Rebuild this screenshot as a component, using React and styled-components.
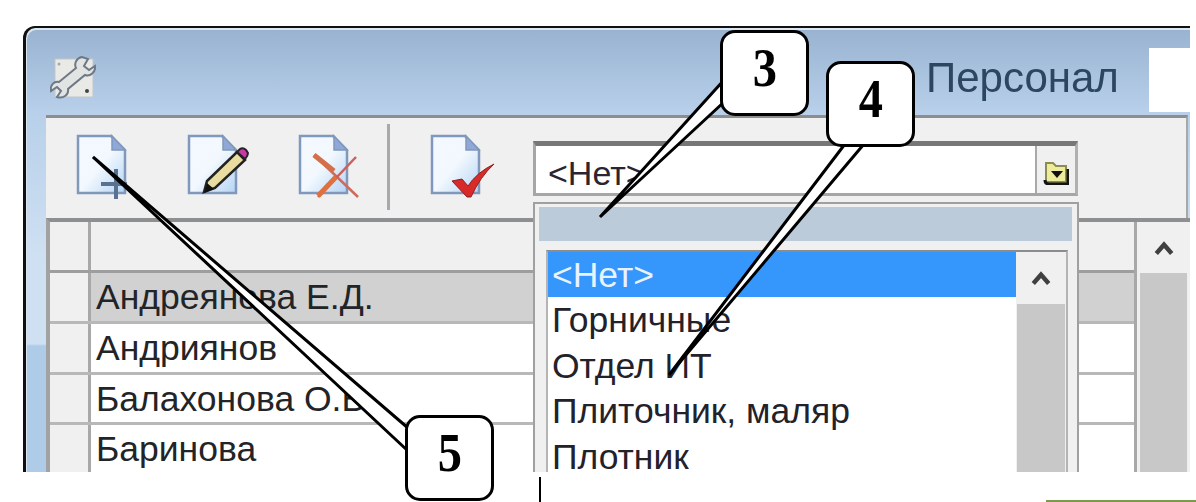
import React from "react";
import styled, { createGlobalStyle } from "styled-components";

const GlobalStyle = createGlobalStyle`
  html, body {
    margin: 0;
    padding: 0;
    background: #ffffff;
    overflow: hidden;
  }
`;

const Page = styled.div`
  position: relative;
  width: 1196px;
  height: 502px;
  padding: 26px 0 0 23px;
  box-sizing: border-box;
  display: flex;
  flex-direction: column;
  overflow: hidden;
  font-family: "Liberation Sans", Arial, sans-serif;
`;

const AppWindow = styled.div`
  position: relative;
  width: 1167px;
  height: 446px;
  flex: none;
  box-sizing: border-box;
  border-top: 2px solid #111111;
  border-left: 3px solid #111111;
  border-top-left-radius: 12px;
  box-shadow: inset 1px 2px 0 #dbe6f0;
  background: linear-gradient(
    180deg,
    #98b2d0 0,
    #b8d0ea 85px,
    #cfe0f2 230px,
    #cfe0f2 316px,
    #aecbe8 318px,
    #aecbe8 100%
  );
  overflow: hidden;
  display: flex;
  flex-direction: column;
  filter: blur(0.6px);
`;

const TitleBar = styled.header`
  height: 87px;
  flex: none;
  display: flex;
  align-items: center;
  padding-left: 24px;
`;

const AppIcon = styled.svg`
  width: 46px;
  height: 46px;
  flex: none;
  margin-top: 12px;
`;

const Title = styled.h1`
  margin: 13px 0 0 830px;
  flex: none;
  font-size: 42px;
  font-weight: 400;
  color: #2c4560;
  white-space: nowrap;
`;

const ActiveTab = styled.div`
  align-self: flex-end;
  width: 43px;
  height: 64px;
  margin: 0 0 3px 30px;
  flex: none;
  background: #ffffff;
`;

const Panel = styled.section`
  margin-left: 20px;
  flex: 1;
  min-height: 0;
  display: flex;
  flex-direction: column;
`;

const Toolbar = styled.div`
  position: relative;
  height: 103px;
  flex: none;
  margin-right: 2px;
  display: flex;
  align-items: center;
  padding: 3px 0 0 30px;
  box-sizing: border-box;
  background: #f0f0f0;
  border-top: 3px solid #8b8d8f;
  border-right: 2px solid #a8a8a8;
`;

const ToolButton = styled.button`
  width: 54px;
  height: 62px;
  padding: 0;
  margin: 0 ${(p) => p.$gap}px 11px 0;
  border: none;
  background: none;
  flex: none;
`;

const ToolIcon = styled.svg`
  width: 54px;
  height: 62px;
  display: block;
  overflow: visible;
`;

const ToolSeparator = styled.div`
  width: 3px;
  height: 86px;
  background: #a8a9aa;
  margin: 0 40px 5px 0;
  flex: none;
`;

const Combo = styled.div`
  width: 545px;
  height: 55px;
  margin: 0 0 3px 49px;
  box-sizing: border-box;
  flex: none;
  display: flex;
  background: #ffffff;
  border: 3px solid #a6a6a6;
  border-top: 5px solid #777777;
  border-right-color: #b0b0b0;
`;

const ComboValue = styled.div`
  flex: 1;
  padding-left: 12px;
  font-size: 34px;
  line-height: 54px;
  color: #2a2530;
`;

const ComboButton = styled.div`
  width: 38px;
  flex: none;
  display: flex;
  align-items: center;
  justify-content: center;
  background: #f0f0f0;
  border-left: 2px solid #a9a9a9;
`;

const FolderIcon = styled.svg`
  width: 26px;
  height: 26px;
  margin-top: 6px;
`;

const Grid = styled.div`
  flex: 1;
  min-height: 0;
  display: flex;
  border-top: 4px solid #8d8f90;
  border-left: 4px solid #a2a2a2;
  overflow: hidden;
`;

const GridBody = styled.div`
  flex: 1;
  min-width: 0;
  display: flex;
  flex-direction: column;
  border-right: 3px solid #a8a8a8;
`;

const GridRow = styled.div`
  display: flex;
  flex: none;
  height: ${(p) => p.$height}px;
  box-sizing: border-box;
  border-bottom: 3px solid ${(p) => (p.$header ? "#9d9e9f" : "#b8b8b8")};
  background: ${(p) => (p.$header ? "#f0f0f0" : p.$selected ? "#d1d1d1" : "#ffffff")};
`;

const RowHead = styled.div`
  width: 38px;
  flex: none;
  background: #f0f0f0;
  border-right: 3px solid #a8a8a8;
`;

const RowName = styled.div`
  flex: 1;
  padding-left: 5px;
  font-size: 35.5px;
  line-height: 48px;
  color: #222428;
  white-space: nowrap;
`;

const ScrollBar = styled.div`
  width: ${(p) => p.$width}px;
  flex: none;
  display: flex;
  flex-direction: column;
  align-items: stretch;
  background: #f0f0f0;
`;

const ScrollUp = styled.div`
  height: ${(p) => p.$height}px;
  flex: none;
  display: flex;
  align-items: center;
  justify-content: center;
`;

const Chevron = styled.svg`
  width: 22px;
  height: 16px;
`;

const ScrollTrack = styled.div`
  flex: 1;
  margin: 0 ${(p) => p.$inset}px;
  background: #c8c8c8;
`;

const Dropdown = styled.div`
  position: absolute;
  left: 507px;
  top: 174px;
  width: 546px;
  height: 272px;
  box-sizing: border-box;
  padding: 3px 5px 0 4px;
  background: #f0f0f0;
  border: 2px solid #a0a0a0;
  border-bottom: none;
  display: flex;
  flex-direction: column;
`;

const DropdownHeader = styled.div`
  height: 34px;
  flex: none;
  background: #bccbd9;
`;

const ListBox = styled.div`
  flex: 1;
  min-height: 0;
  margin: 9px 4px 0 7px;
  display: flex;
  background: #ffffff;
  border: 2px solid #b4b4b4;
  border-top-color: #8c8c8c;
  border-bottom: none;
`;

const ListItems = styled.ul`
  flex: 1;
  min-width: 0;
  margin: 0;
  padding: 0;
  list-style: none;
`;

const ListItem = styled.li`
  height: 45.4px;
  box-sizing: border-box;
  padding-left: 4px;
  font-size: 35.5px;
  line-height: 46px;
  color: ${(p) => (p.$active ? "#e8f3ff" : "#23222a")};
  background: ${(p) => (p.$active ? "#3596fc" : "transparent")};
  white-space: nowrap;
`;

const CalloutLines = styled.svg`
  position: absolute;
  left: 0;
  top: 0;
  width: 1196px;
  height: 502px;
  pointer-events: none;
`;

const Callout = styled.div`
  position: absolute;
  left: ${(p) => p.$x}px;
  top: ${(p) => p.$y}px;
  width: 89px;
  height: 86px;
  box-sizing: border-box;
  border: 3px solid #000000;
  border-radius: 15px;
  background: #ffffff;
  display: flex;
  align-items: center;
  justify-content: center;
  padding-bottom: 11px;
  font-family: "Liberation Serif", "Times New Roman", serif;
  font-size: 55px;
  font-weight: 700;
  color: #000000;
`;

const Digit = styled.span`
  display: inline-block;
  transform: scaleX(0.88);
`;

const Footer = styled.footer`
  flex: 1;
  display: flex;
  position: relative;
`;

const FooterTick = styled.div`
  width: 2px;
  height: 25px;
  margin: 5px 0 0 516px;
  background: #000000;
  flex: none;
`;

const FooterRule = styled.div`
  align-self: flex-end;
  width: 150px;
  height: 2px;
  margin-left: 505px;
  background: #7b9a4e;
  flex: none;
`;

const DocSheet = ({ id }) => (
  <>
    <defs>
      <linearGradient id={id} x1="0" y1="0" x2="1" y2="1">
        <stop offset="0" stopColor="#f4f9ff" />
        <stop offset="0.5" stopColor="#f2f8fe" />
        <stop offset="1" stopColor="#b4d4f5" />
      </linearGradient>
    </defs>
    <path d="M2 3 H35 L49 17 V60 H2 Z" fill={`url(#${id})`} stroke="#8098bb" strokeWidth="2.5" />
    <path d="M36 3 V17 H49 Z" fill="#8fa8d8" stroke="#8098bb" strokeWidth="1.5" />
  </>
);

const AddIcon = () => (
  <ToolIcon viewBox="0 0 54 62">
    <DocSheet id="docAdd" />
    <path d="M25 51 H51 M40 36 V66" stroke="#5a7292" strokeWidth="4" fill="none" />
  </ToolIcon>
);

const EditIcon = () => (
  <ToolIcon viewBox="0 0 54 62">
    <DocSheet id="docEdit" />
    <path d="M17 59 L20 48 L50 19 L58 27 L28 55 Z" fill="#e9dca0" stroke="#222222" strokeWidth="2.5" />
    <path d="M17 60 L20 50 L27 56 Z" fill="#111111" />
    <path d="M50 19 L53 16 Q56 14 59 17 L61 20 Q61 23 58 26 Z" fill="#c93aa6" stroke="#222222" strokeWidth="2" />
  </ToolIcon>
);

const DeleteIcon = () => (
  <ToolIcon viewBox="0 0 54 62">
    <DocSheet id="docDel" />
    <path d="M16 22 L60 64" stroke="#cf6b5c" strokeWidth="2.5" fill="none" />
    <path d="M16 22 L36 38" stroke="#d56f4a" strokeWidth="5" fill="none" />
    <path d="M20 64 L58 24" stroke="#c9605a" strokeWidth="2.5" fill="none" />
    <path d="M20 63 L38 44" stroke="#e0703f" strokeWidth="5" fill="none" />
  </ToolIcon>
);

const CheckIcon = () => (
  <ToolIcon viewBox="0 0 54 62">
    <DocSheet id="docChk" />
    <path d="M22 48 L32 46 L38 53 Q46 40 64 31 Q50 44 41 64 L37 64 Z" fill="#d92a2a" stroke="#8e1f1f" strokeWidth="1" />
  </ToolIcon>
);

const UpChevron = () => (
  <Chevron viewBox="0 0 20 14">
    <path d="M3 12 L10 4 L17 12" fill="none" stroke="#404040" strokeWidth="4" />
  </Chevron>
);

const App = () => {
  return (
    <Page>
      <GlobalStyle />
      <AppWindow>
        <TitleBar>
          <AppIcon viewBox="0 0 46 46">
            <rect x="5" y="4" width="38" height="38" fill="#e9e9e6" stroke="#c3c5c8" />
            <circle cx="9" cy="9" r="1.5" fill="#a8a8a8" />
            <circle cx="37" cy="36" r="2" fill="#444444" />
            <path
              d="M32 2 C26 3 24 9 26 13 L9 27 C4 26 0 30 1 36 L7 32 L11 36 L7 42 C13 44 19 40 18 34 L35 20 C40 22 46 17 45 11 L39 15 L34 11 L38 4 Z"
              fill="#e2e3e3"
              stroke="#6d7986"
              strokeWidth="2"
            />
          </AppIcon>
          <Title>Персонал</Title>
          <ActiveTab />
        </TitleBar>
        <Panel>
          <Toolbar>
            <ToolButton $gap={57}>
              <AddIcon />
            </ToolButton>
            <ToolButton $gap={57}>
              <EditIcon />
            </ToolButton>
            <ToolButton $gap={35}>
              <DeleteIcon />
            </ToolButton>
            <ToolSeparator />
            <ToolButton $gap={0}>
              <CheckIcon />
            </ToolButton>
            <Combo>
              <ComboValue>&lt;Нет&gt;</ComboValue>
              <ComboButton>
                <FolderIcon viewBox="0 0 26 26">
                  <path d="M3 23 V4 H10 L13 7 H23 V23 Z" fill="#ecec9a" stroke="#8c8c52" strokeWidth="2" />
                  <path d="M2 21 Q2 25 6 25 H25 V10" fill="none" stroke="#141414" strokeWidth="3" />
                  <path d="M8 12 H20 L14 19 Z" fill="#111111" />
                </FolderIcon>
              </ComboButton>
            </Combo>
          </Toolbar>
          <Grid>
            <GridBody>
              <GridRow $header $height={51}>
                <RowHead />
              </GridRow>
              <GridRow $selected $height={51}>
                <RowHead />
                <RowName>Андреянова Е.Д.</RowName>
              </GridRow>
              <GridRow $height={51}>
                <RowHead />
                <RowName>Андриянов</RowName>
              </GridRow>
              <GridRow $height={50}>
                <RowHead />
                <RowName>Балахонова О.В.</RowName>
              </GridRow>
              <GridRow $height={51}>
                <RowHead />
                <RowName>Баринова</RowName>
              </GridRow>
            </GridBody>
            <ScrollBar $width={53}>
              <ScrollUp $height={51}>
                <UpChevron />
              </ScrollUp>
              <ScrollTrack $inset={3} />
            </ScrollBar>
          </Grid>
        </Panel>
        <Dropdown>
          <DropdownHeader />
          <ListBox>
            <ListItems>
              <ListItem $active>&lt;Нет&gt;</ListItem>
              <ListItem>Горничные</ListItem>
              <ListItem>Отдел ИТ</ListItem>
              <ListItem>Плиточник, маляр</ListItem>
              <ListItem>Плотник</ListItem>
            </ListItems>
            <ScrollBar $width={50}>
              <ScrollUp $height={52}>
                <UpChevron />
              </ScrollUp>
              <ScrollTrack $inset={1} />
            </ScrollBar>
          </ListBox>
        </Dropdown>
      </AppWindow>
      <Footer>
        <FooterTick />
        <FooterRule />
      </Footer>
      <CalloutLines viewBox="0 0 1196 502">
        <path d="M724 80 L600 217 L724 102" fill="#ffffff" stroke="#000000" strokeWidth="3" />
        <path d="M845 144 L669 375 L864 144" fill="#ffffff" stroke="#000000" strokeWidth="3" />
        <path d="M408 428 L93 157 L408 451" fill="#ffffff" stroke="#000000" strokeWidth="3" />
      </CalloutLines>
      <Callout $x={720} $y={30}><Digit>3</Digit></Callout>
      <Callout $x={826} $y={61}><Digit>4</Digit></Callout>
      <Callout $x={405} $y={415}><Digit>5</Digit></Callout>
    </Page>
  );
};

export default App;
